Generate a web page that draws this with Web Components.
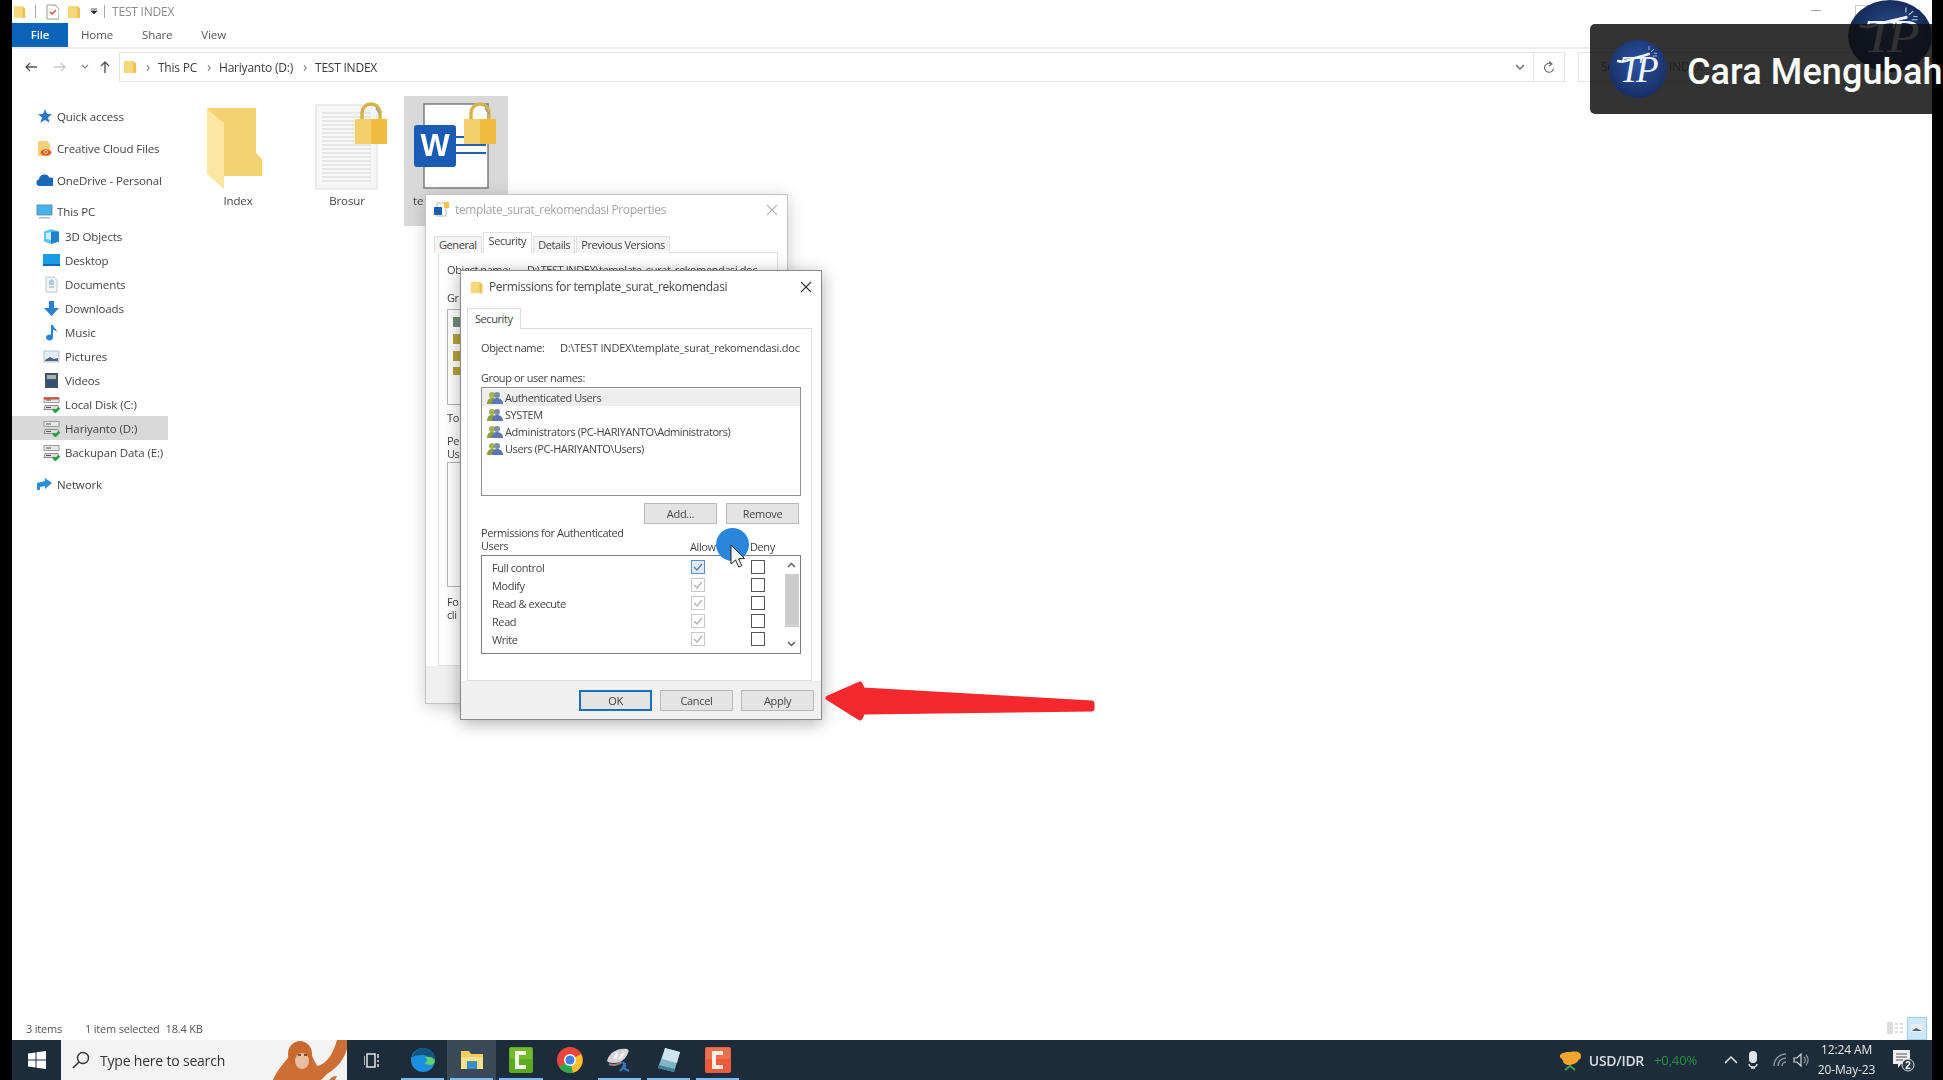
<!DOCTYPE html>
<html lang="id">
<head>
<meta charset="utf-8">
<title>TEST INDEX</title>
<style>
html, body { margin: 0; height: 100%; background: #000; overflow: hidden; }
body { font: 11.5px "Open Sans", "Noto Sans", sans-serif; color: #3c3c3c; letter-spacing: -.12px; }
</style>
</head>
<body>
<desk-frame>
  <explorer-window>
    <title-bar></title-bar>
    <ribbon-tabs></ribbon-tabs>
    <address-bar></address-bar>
    <main-area>
      <nav-pane slot="nav">
        <nav-item icon="star">Quick access</nav-item>
        <nav-item icon="cc" gap="8">Creative Cloud Files</nav-item>
        <nav-item icon="onedrive" gap="8">OneDrive - Personal</nav-item>
        <nav-item icon="pc" gap="7">This PC</nav-item>
        <nav-item icon="cube" sub gap="1">3D Objects</nav-item>
        <nav-item icon="desktop" sub>Desktop</nav-item>
        <nav-item icon="docs" sub>Documents</nav-item>
        <nav-item icon="down" sub>Downloads</nav-item>
        <nav-item icon="music" sub>Music</nav-item>
        <nav-item icon="pics" sub>Pictures</nav-item>
        <nav-item icon="video" sub>Videos</nav-item>
        <nav-item icon="diskc" sub>Local Disk (C:)</nav-item>
        <nav-item icon="disk" sub selected>Hariyanto (D:)</nav-item>
        <nav-item icon="disk" sub>Backupan Data (E:)</nav-item>
        <nav-item icon="network" gap="8">Network</nav-item>
      </nav-pane>
      <file-tile thumb="folder">Index</file-tile>
      <file-tile thumb="pdf">Brosur</file-tile>
      <file-tile thumb="word" selected>te</file-tile>
    </main-area>
    <status-bar></status-bar>
  </explorer-window>
  <task-bar></task-bar>

  <win-dialog x="425" y="194" w="363" h="510" icon="wordsmall" heading="template_surat_rekomendasi Properties" dim>
    <props-body></props-body>
  </win-dialog>
  <win-dialog x="460" y="270" w="362" h="450" icon="folder" heading="Permissions for template_surat_rekomendasi">
    <perm-body></perm-body>
  </win-dialog>
  <click-mark></click-mark>
  <red-arrow></red-arrow>
  <corner-logo></corner-logo>
  <title-card>Cara Mengubah</title-card>
</desk-frame>

<script>
"use strict";

const svg = (w, h, body, vb) =>
    `<svg width="${w}" height="${h}" viewBox="${vb || `0 0 ${w} ${h}`}" style="display:block;flex:none">${body}</svg>`;

const lockShape = `<path d="M7 19v-8a9 9 0 0 1 18 0v8" fill="none" stroke="#d7b24a" stroke-width="3.4"/>
    <path d="M21 6l4 6" stroke="#999" stroke-width="1.4"/>
    <rect x="0" y="17" width="32" height="25" rx="1" fill="#f4cf6c"/><rect x="16" y="17" width="16" height="25" fill="#f0bd3e"/>`;

const folderSmall = `<path d="M1 2h10l3 3v10H1z" fill="#f6d77c"/><path d="M11 2l3 3v10h-3z" fill="#eebf4e"/>`;
const driveShape = `<rect x="1" y="1.5" width="15" height="5" fill="#e8e8e8" stroke="#8b8b8b" stroke-width=".8"/>
    <path d="M2 9.5h13l1 4H1z" fill="#dcdcdc" stroke="#777" stroke-width=".8"/>
    <path d="M3 4h5M3 11.5h5" stroke="#555" stroke-width="1"/>
    <path d="M10 13.5l2.4 2.4 4-4.2" fill="none" stroke="#1ea33a" stroke-width="2.4"/>`;

const icons = {
    star: `<path d="M9 1l2 5 5 .3-4 3.2 1.6 5.2L9 12l-4.6 2.7L6 9.500 2 6.300 7 6z" fill="#2d77c8"/>`,
    cc: `<path d="M2 1h9l3 3v12H2z" fill="#f5d27a"/><ellipse cx="10" cy="12.500" rx="5.500" ry="3.300" fill="#e2632b"/><circle cx="10" cy="12" r="1.600" fill="none" stroke="#fbd9b8" stroke-width=".8"/>`,
    onedrive: `<path d="M3 14a3.500 3.500 0 0 1 0-6.800 5.500 5.500 0 0 1 10.500-1.400A4.300 4.300 0 0 1 17 14z" fill="#1768b8"/>`,
    pc: `<rect x="1" y="2" width="15" height="10" fill="#45b3ee" stroke="#5b7f94" stroke-width=".8"/><rect x="3" y="14" width="11" height="1.500" fill="#aebcc6"/>`,
    cube: `<path d="M8 1l8 2.500v10L8 16l-7-2.500v-10z" fill="#5dc7f0"/><path d="M8 3.500l8-.0v10L8 16z" fill="#1b86cf"/><path d="M3 5l5-1v8l-5-1z" fill="#cdeefa"/>`,
    desktop: `<rect x="0" y="2" width="17" height="11" fill="#1a9be3"/><rect x="0" y="12" width="17" height="2" fill="#0c6cb0"/>`,
    docs: `<path d="M3 1h8l3 3v12H3z" fill="#f4f6f8" stroke="#b6bcc2" stroke-width=".8"/><path d="M6 5l2.500-2L11 5v4H6z" fill="#a9cbe6"/><path d="M6 11h5" stroke="#8aa" stroke-width="1"/>`,
    down: `<path d="M6 1h5v7h5l-7.500 8L1 8h5z" fill="#2a7fd0"/>`,
    music: `<path d="M8 1h2c.5 3 3.500 3.500 4 7-1.500-1.500-3-2-4-2v7.500a3.500 3 0 1 1-2-2.700z" fill="#2384d4"/>`,
    pics: `<rect x="1" y="3" width="15" height="11" fill="#e4edf3" stroke="#aab6bf" stroke-width=".8"/><path d="M2 12l5-3 4 2 4-1v3H2z" fill="#506478"/>`,
    video: `<rect x="2" y="1" width="13" height="15" fill="#47525e"/><rect x="4" y="3" width="9" height="4" fill="#a4b3c0"/><rect x="4" y="9" width="9" height="5" fill="#2c4f80"/>`,
    disk: driveShape,
    diskc: driveShape + `<rect x="1" y="1.500" width="15" height="2" fill="#d24b35"/>`,
    network: `<path d="M1 7l8-2V2l7 5-7 6v-3l-5 1v3H1z" fill="#2b8fd8"/>`,
    folder: folderSmall,
    wordsmall: `<rect x="4" y="1" width="9" height="13" fill="#fff" stroke="#aaa" stroke-width=".8"/><rect x="1" y="5" width="8" height="8" fill="#1d5fb3"/><path d="M11 0h5v6h-5z" fill="#f1c14d"/>`
};

// TP mark, used by the title card and by the corner watermark
const tpMark = (w, h, gid, dark, rim) => {
    const u = w / 58;
    return svg(w, h, `
<defs><radialGradient id="${gid}" cx=".5" cy=".4" r=".62"><stop offset="0" stop-color="${dark}"/><stop offset="1" stop-color="${rim}"/></radialGradient></defs>
<ellipse cx="${w / 2}" cy="${h / 2}" rx="${w / 2}" ry="${h / 2}" fill="url(#${gid})"/>
<g transform="scale(${u} ${h / 58})">
  <text x="28" y="42" text-anchor="middle" font-family="Liberation Serif" font-style="italic" font-size="37" letter-spacing="-4" fill="#f2f5fa">TP</text>
  <path d="M9 21c6 2 10-1 17-3s11-3 14-4" fill="none" stroke="#f2f5fa" stroke-width="2.400" stroke-linecap="round"/>
  <path d="M42 12l3-3M44 16h4M40 10V6M45 13l3 .500" stroke="#b7cdee" stroke-width=".8"/>
</g>`);
};

class WebBox extends HTMLElement {
    connectedCallback() {
        if (this.shadowRoot) return;
        this.attachShadow({mode: 'open'});
        this.shadowRoot.innerHTML = this.markup();
    }
    markup() { return '<slot></slot>'; }
}

class DeskFrame extends WebBox {
    markup() {
        return `<style>
:host { display: flex; flex-direction: column; position: relative; height: 1080px; margin: 0 11px 0 12px; background: #fff; }
</style><slot></slot>`;
    }
}

class ExplorerWindow extends WebBox {
    markup() {
        return `<style>
:host { display: flex; flex-direction: column; flex: 1; min-height: 0; background: #fff; filter: blur(.5px); }
</style><slot></slot>`;
    }
}

class TitleBar extends WebBox {
    markup() {
        return `<style>
:host { display: flex; align-items: center; height: 23px; flex: none; padding-left: 1px; color: #8b8b8b; font-size: 12px; letter-spacing: -.2px; box-sizing: border-box; position: relative; }
.sep { width: 1px; height: 13px; background: #aaa; flex: none; }
.min { position: absolute; left: 1799px; top: 10px; width: 10px; height: 1px; background: #aaa; }
.max { position: absolute; left: 1843px; top: 5px; width: 14px; height: 14px; border: 1px solid #ccc; }
</style>
${svg(13, 18, folderSmall, '0 0 15 17')}<span class="sep" style="margin:0 10px 0 9px"></span>
${svg(13, 16, `<path d="M1 1h8l4 4v10H1z" fill="#fff" stroke="#999"/><path d="M4 8l2 2 4-4" fill="none" stroke="#c8553d" stroke-width="1.300"/>`)}
<span style="width:8px"></span>${svg(14, 18, folderSmall, '0 0 15 17')}
<span style="width:10px"></span>${svg(6, 8, `<path d="M0 1h6M0 3l3 3 3-3z" stroke="#333" stroke-width=".8" fill="#333"/>`)}<span class="sep" style="margin:0 7px"></span>
<span>TEST INDEX</span><i class="min"></i><i class="max"></i>`;
    }
}

class RibbonTabs extends WebBox {
    markup() {
        return `<style>
:host { display: flex; align-items: center; height: 24px; flex: none; border-bottom: 2px solid #eee; color: #555; font-size: 11.5px; }
b { font-weight: 600; background: #0a63b8; color: #fff; width: 56px; height: 24px; line-height: 23px; text-align: center; margin-right: 13px; }
span { margin-right: 29px; padding-bottom: 2px; }
</style><b>File</b><span>Home</span><span>Share</span><span>View</span>`;
    }
}

class AddressBar extends WebBox {
    markup() {
        const chev = `<span class="c">›</span>`;
        return `<style>
:host { display: flex; align-items: center; height: 30px; margin-top: 3px; flex: none; color: #3c3c3c; font-size: 12px; letter-spacing: -.22px; }
.nav { display: flex; width: 107px; align-items: center; flex: none; }
.box { display: flex; align-items: center; border: 1px solid #e4e4e4; box-sizing: border-box; height: 30px; width: 1446px; flex: none; padding-left: 3px; }
.c { margin: 0 8px 0 10px; color: #777; font-size: 14px; line-height: 14px; }
.c.first { margin-left: 9px; }
.end { margin-left: auto; display: flex; align-items: center; height: 100%; }
.dd { padding-right: 8px; }
.rf { border-left: 1px solid #e4e4e4; height: 100%; width: 30px; display: flex; align-items: center; justify-content: center; }
.search { margin-left: 13px; border: 1px solid #e4e4e4; box-sizing: border-box; height: 30px; flex: 1; padding-left: 22px; line-height: 28px; color: #777; white-space: nowrap; overflow: hidden; }
</style>
<div class="nav">
  <span style="margin-left:12px">${svg(14, 12, `<path d="M13 6H2M6 2L2 6l4 4" fill="none" stroke="#555" stroke-width="1.300"/>`)}</span>
  <span style="margin-left:15px">${svg(14, 12, `<path d="M1 6h11M8 2l4 4-4 4" fill="none" stroke="#c9c9c9" stroke-width="1.300"/>`)}</span>
  <span style="margin-left:14px">${svg(8, 6, `<path d="M1 1l3 3 3-3" fill="none" stroke="#888" stroke-width="1.200"/>`)}</span>
  <span style="margin-left:10px">${svg(12, 14, `<path d="M6 13V2M2 6l4-4 4 4" fill="none" stroke="#555" stroke-width="1.400"/>`)}</span>
</div>
<div class="box">
  ${svg(14, 16, folderSmall, '0 0 15 17')}<span class="c first">›</span><span>This PC</span>${chev}<span>Hariyanto (D:)</span>${chev}<span>TEST INDEX</span>
  <div class="end"><span class="dd">${svg(10, 7, `<path d="M1 1l4 4 4-4" fill="none" stroke="#666" stroke-width="1.300"/>`)}</span>
  <span class="rf">${svg(12, 13, `<path d="M10.500 7.500a4.500 4.500 0 1 1-2-4.500M6 .5l3 2.500-3 2" fill="none" stroke="#666" stroke-width="1.100"/>`)}</span></div>
</div>
<div class="search">Search TEST INDEX</div>`;
    }
}

class MainArea extends WebBox {
    markup() {
        return `<style>
:host { display: flex; flex: 1; min-height: 0; }
.files { display: flex; align-items: flex-start; gap: 5px; padding: 14px 0 0 18px; }
</style><slot name="nav"></slot><div class="files"><slot></slot></div>`;
    }
}

class NavPane extends WebBox {
    markup() {
        return `<style>
:host { display: block; width: 156px; flex: none; padding-top: 22px; box-sizing: border-box; color: #444; }
</style><slot></slot>`;
    }
}

class NavItem extends WebBox {
    markup() {
        const sub = this.hasAttribute('sub');
        const gap = this.getAttribute('gap') || 0;
        return `<style>
:host { display: flex; align-items: center; height: 24px; margin-top: ${gap}px; padding-left: ${sub ? 31 : 24}px; background: ${this.hasAttribute('selected') ? '#d9d9d9' : 'transparent'}; white-space: nowrap; }
span { margin-left: ${sub ? 5 : 4}px; }
</style>${svg(17, 17, icons[this.getAttribute('icon')], '0 0 17 17')}<span><slot></slot></span>`;
    }
}

class FileTile extends WebBox {
    markup() {
        const kind = this.getAttribute('thumb');
        const art = {
            folder: `<path d="M21 12h49v45l6 6v17H38z" fill="#f5d271"/><path d="M21 13l17 14v66L21 78z" fill="#fbe6a2"/>`,
            pdf: `<rect x="21" y="9" width="61" height="84" fill="#f7f7f7" stroke="#dedede"/>
                <path d="M27 17h49M27 21h49M27 25h49M27 29h49M27 33h49M27 37h49M27 41h49M27 45h49M27 49h49M27 53h49M27 57h49M27 61h49M27 65h49M27 69h49M27 73h49M27 77h49M27 81h49M27 85h49" stroke="#d5d5d5"/>
                <g transform="translate(60 6)">${lockShape}</g>`,
            word: `<rect x="20" y="8" width="64" height="84" fill="#fff" stroke="#7d7d7d" stroke-width="1.500"/>
                <path d="M50 41h32M50 49h32M50 57h32" stroke="#1d5fb3" stroke-width="2"/>
                <rect x="10" y="29" width="42" height="42" rx="3" fill="#1a5cb5"/>
                <text x="31" y="60" text-anchor="middle" font-family="Liberation Sans" font-weight="700" font-size="31" fill="#fff">W</text>
                <g transform="translate(60 6)">${lockShape}</g>`
        }[kind];
        const sel = this.hasAttribute('selected');
        return `<style>
:host { display: block; width: 104px; height: 130px; background: ${sel ? '#d9d9d9' : 'transparent'}; text-align: ${sel ? 'left' : 'center'}; color: #444; flex: none; }
.l { display: block; padding: 0 9px; margin-top: 1px; line-height: 16px; }
</style>${svg(104, 96, art)}<span class="l"><slot></slot></span>`;
    }
}

class StatusBar extends WebBox {
    markup() {
        return `<style>
:host { display: flex; align-items: center; height: 24px; flex: none; padding-left: 14px; color: #555; font-size: 11px; letter-spacing: -.2px; padding-right: 5px; }
.a { width: 59px; }
.b { margin-left: 6px; }
.v { margin-left: auto; display: flex; align-items: center; }
.on { width: 20px; height: 23px; background: #cde8fa; border: 1px solid #9fd0ee; box-sizing: border-box; display: flex; align-items: center; justify-content: center; margin-left: 4px; }
</style>
<span class="a">3 items</span><span>1 item selected</span><span class="b">18.4 KB</span>
<span class="v">${svg(16, 12, `<rect x="0" y="0" width="6" height="12" fill="#ddd"/><path d="M8 2h3M13 2h3M8 6h3M13 6h3M8 10h3M13 10h3" stroke="#bbb"/>`)}
<span class="on">${svg(12, 8, `<rect width="12" height="8" fill="#e6eef3"/><path d="M1 7l4-3 6 3z" fill="#50606e"/>`)}</span></span>`;
    }
}

class TaskBar extends WebBox {
    markup() {
        const app = (art, opts = {}) =>
            `<span class="app ${opts.on ? 'on' : ''} ${opts.run === false ? '' : 'run'}">${art}</span>`;
        const edge = svg(24, 24, `<circle cx="12" cy="12" r="12" fill="#1a8fe0"/><path d="M1 9C3 3 8 0 12 0c6 0 12 5 12 12 0 3-2 5-5 5-3 0-5-1-6-2 3 0 5-1 5-3 0-3-3-5-7-5-4 0-8 1-10 2z" fill="#10557f"/><path d="M14 9c4-1 8 0 10 3 0 3-2 5-5 5-3 0-5-1-6-2 2 0 3-1 3-3 0-1-1-2-2-3z" fill="#5fcf70"/>`);
        const files = svg(24, 22, `<path d="M1 2h8l2 3h12v15H1z" fill="#f4cd5d"/><rect x="1" y="8" width="22" height="12" fill="#fbe08a"/><rect x="7" y="12" width="10" height="8" fill="#3c8fcd"/>`);
        const green = svg(24, 26, `<rect width="24" height="26" rx="2" fill="#5cab1d"/><rect x="1" y="1" width="22" height="11" rx="1" fill="#74bb2b"/><path d="M17 6H8v14h9" fill="none" stroke="#f2f7ec" stroke-width="4"/>`);
        const chrome = svg(26, 26, `<circle cx="13" cy="13" r="13" fill="#e8453c"/><path d="M13 13L2 20a13 13 0 0 0 14 5.700z" fill="#2da94f"/><path d="M13 13l11-6a13 13 0 0 1-8 18.700z" fill="#fbc02d"/><circle cx="13" cy="13" r="6" fill="#fff"/><circle cx="13" cy="13" r="4.500" fill="#3d80e8"/>`);
        const swirl = svg(28, 26, `<path d="M2 14C4 6 12 1 22 2c2 1 2 2 1 4-3 7-8 10-13 10-3 0-6 0-8-2z" fill="#d8d4d6"/><path d="M8 12l3-7 2 1-1 6zM13 12l5-7 2 1-4 6z" fill="#f2f2f2"/><path d="M4 17c5 2 9 1 13-2" fill="none" stroke="#9a7f84" stroke-width="2"/><path d="M18 15l2 4-5 5M20 16l-2 5 6 3" fill="none" stroke="#2e78c4" stroke-width="2.400"/>`);
        const note = svg(24, 26, `<path d="M8 1l15 4-6 20L1 21z" fill="#7fb6c4"/><path d="M8 1l15 4-3 11L5 12z" fill="#cfe6ef"/><path d="M1 21l16 4 1-3-16-4z" fill="#3f7f96"/>`);
        const orange = svg(26, 26, `<rect width="26" height="26" rx="2" fill="#ea5c3a"/><rect x="1" y="1" width="24" height="11" rx="1" fill="#ee714f"/><path d="M18 6H9v14h9" fill="none" stroke="#fbeee9" stroke-width="4"/>`);
        return `<style>
:host { display: flex; align-items: stretch; height: 40px; flex: none; background: #1c2c3b; color: #eaeaea; filter: blur(.4px); }
.win { width: 49px; display: flex; align-items: center; justify-content: center; flex: none; }
.search { width: 286px; flex: none; background: #f3f3f3; color: #333; display: flex; align-items: center; position: relative; font-size: 14px; letter-spacing: -.2px; overflow: hidden; }
.search .ic { margin: 0 9px 0 10px; }
.orang { position: absolute; right: 0; top: 0; }
.tv { width: 50px; display: flex; align-items: center; justify-content: center; flex: none; }
.apps { display: flex; margin-left: 1px; }
.app { width: 49.200px; display: flex; align-items: center; justify-content: center; position: relative; }
.app.on { background: #3a4a58; }
.app.run::after { content: ""; position: absolute; left: 3px; right: 3px; bottom: 0; height: 2px; background: #7dbdf0; }
.tray { margin-left: auto; display: flex; align-items: center; padding-right: 16px; }
.usd { margin-left: 7px; font-size: 14px; font-weight: 600; color: #d9dde2; letter-spacing: -.3px; }
.pct { margin-left: 10px; color: #1e9442; font-size: 13px; width: 68px; white-space: nowrap; }
.clock { width: 67px; text-align: center; font-size: 12px; line-height: 20px; color: #e6e6e6; margin: 0 12px 0 4px; }
.clock div { white-space: nowrap; }
</style>
<div class="win">${svg(18, 18, `<path d="M0 2.500l7.500-1V8.500H0zM8.500 1.300L18 0v8.500H8.500zM0 9.500h7.500v7L0 15.500zM8.500 9.500H18V18l-9.500-1.300z" fill="#fff"/>`)}</div>
<div class="search"><span class="ic">${svg(20, 20, `<circle cx="12" cy="8" r="5.500" fill="none" stroke="#333" stroke-width="1.400"/><path d="M8 12l-6 6" stroke="#333" stroke-width="1.600"/>`)}</span>Type here to search
  <span class="orang">${svg(80, 40, `<path d="M6 40C10 30 18 22 24 14c6-6 20-6 22 4l4 8c10-2 16-12 20-26h12c-2 14-8 26-22 34l-6 6z" fill="#cd6e34"/><ellipse cx="33" cy="14" rx="12" ry="13" fill="#c9692f"/><ellipse cx="35" cy="21" rx="7" ry="8" fill="#e8bf9e"/><path d="M31 15h3M37 15h3" stroke="#5a2d10" stroke-width="1.300"/><path d="M62 40c2-2 4-4 8-4l-2 4z" fill="#cd6e34"/>`)}</span>
</div>
<div class="tv">${svg(16, 15, `<rect x="3" y="1" width="8" height="13" fill="none" stroke="#e4e4e4" stroke-width="1.500"/><path d="M0 3v9M14 1v4M14 7v2M14 11v3" stroke="#e4e4e4" stroke-width="1.500"/>`)}</div>
<div class="apps">
  ${app(edge)}${app(files, {on: true})}${app(green)}${app(chrome, {run: false})}${app(swirl)}${app(note)}${app(orange)}
</div>
<div class="tray">
  ${svg(24, 24, `<path d="M2 7c3-3 7-3 9-3s6-1 9 0c3 1 3 3 3 5s-2 2-3 4-6 4-9 4-6-2-6-4-4-3-3-6z" fill="#f0a62c"/><path d="M7 22l5-4 5 4" fill="none" stroke="#3fa34d" stroke-width="2"/>`)}
  <span class="usd">USD/IDR</span><span class="pct">+0,40%</span>
  <span style="margin:0 0 0 2px">${svg(14, 8, `<path d="M1 7l6-6 6 6" fill="none" stroke="#e6e6e6" stroke-width="1.500"/>`)}</span>
  <span style="margin-left:10px">${svg(10, 18, `<rect x="1" y="0" width="8" height="12" rx="4" fill="#e0e4e8"/><path d="M1 13a4 3 0 0 0 8 0M3 17h4" stroke="#e0e4e8" fill="none" stroke-width="1.400"/>`)}</span>
  <span style="margin-left:15px">${svg(14, 14, `<path d="M1 13a12 12 0 0 1 12-12M5 13a8 8 0 0 1 8-8M9 13a4 4 0 0 1 4-4" fill="none" stroke="#8d98a3" stroke-width="1.400"/>`)}</span>
  <span style="margin-left:6px">${svg(16, 14, `<path d="M1 5h3l4-4v12L4 9H1z" fill="none" stroke="#d0d4d8" stroke-width="1.200"/><path d="M11 4a4 4 0 0 1 0 6M13 2a7 7 0 0 1 0 10" fill="none" stroke="#9aa3ab" stroke-width="1.100"/>`)}</span>
  <div class="clock"><div>12:24 AM</div><div>20-May-23</div></div>
  ${svg(24, 24, `<path d="M1 2h17v14H9l-3 4v-4H1z" fill="#eee"/><path d="M4 6h11M4 9h11M4 12h7" stroke="#555" stroke-width="1"/><circle cx="16" cy="17" r="6" fill="#2a3a48" stroke="#ddd"/><text x="16" y="20.500" text-anchor="middle" font-family="Liberation Sans" font-weight="700" font-size="10" fill="#fff">2</text>`)}
</div>`;
    }
}

class WinDialog extends WebBox {
    markup() {
        const a = n => this.getAttribute(n);
        const dim = this.hasAttribute('dim');
        return `<style>
:host { position: absolute; left: ${a('x') - 12}px; top: ${a('y')}px; width: ${a('w')}px; height: ${a('h')}px; box-sizing: border-box; display: flex; flex-direction: column; background: #fff; border: 1px solid ${dim ? '#c4c4c4' : '#8a8a8a'}; box-shadow: 0 3px 16px rgba(0,0,0,${dim ? '.2' : '.32'}); filter: blur(.5px); color: #444; font-size: 11px; letter-spacing: -.42px; }
.top { display: flex; align-items: center; height: ${dim ? 32 : 34}px; box-sizing: border-box; padding-bottom: 3px; flex: none; padding-left: ${dim ? 7 : 9}px; color: ${dim ? '#a5a5a5' : '#444'}; font-size: 12px; letter-spacing: -.35px; }
.top .tt { margin-left: ${dim ? 6 : 5}px; white-space: nowrap; }
.x { margin-left: auto; margin-right: 9px; }
.body { flex: 1; min-height: 0; display: flex; flex-direction: column; }
</style>
<div class="top">${svg(dim ? 16 : 14, 16, icons[a('icon')], '0 0 16 16')}<span class="tt">${a('heading')}</span>
<span class="x">${svg(12, 12, `<path d="M1 1l10 10M11 1L1 11" stroke="${dim ? '#b5b5b5' : '#333'}" stroke-width="1.100"/>`)}</span></div>
<div class="body"><slot></slot></div>`;
    }
}

class WinButton extends WebBox {
    markup() {
        const main = this.hasAttribute('default');
        return `<style>
:host { display: block; width: 73px; height: 21px; box-sizing: border-box; background: #e4e4e4; border: ${main ? '2px solid #1a6fb5' : '1px solid #b9b9b9'}; line-height: ${main ? 17 : 19}px; text-align: center; color: #444; flex: none; letter-spacing: -.3px; }
</style><slot></slot>`;
    }
}

class UserRow extends WebBox {
    markup() {
        const art = `<circle cx="5" cy="4" r="3" fill="#a7b34c"/><path d="M0 13c0-4 2-6 5-6s5 2 5 6z" fill="#8d9e3f"/><circle cx="10" cy="4" r="3" fill="#7a8f9f"/><path d="M5 13c0-4 2-6 5-6s6 2 6 6z" fill="#5a76b4"/>`;
        return `<style>
:host { display: flex; align-items: center; height: 17px; padding-left: 5px; background: ${this.hasAttribute('hot') ? '#eeeeee' : 'transparent'}; white-space: nowrap; }
span { margin-left: 2px; }
</style>${svg(16, 14, art)}<span><slot></slot></span>`;
    }
}

const checkBox = kind => {
    if (kind === 'blue') return svg(14, 14, `<rect x=".5" y=".5" width="13" height="13" fill="#dfeaf5" stroke="#5d8fc4"/><path d="M3 7l3 3 5-6" fill="none" stroke="#4f7fb0" stroke-width="1.200"/>`);
    if (kind === 'grey') return svg(14, 14, `<rect x=".5" y=".5" width="13" height="13" fill="#fff" stroke="#c8c8c8"/><path d="M3 7l3 3 5-6" fill="none" stroke="#b0b0b0" stroke-width="1.200"/>`);
    return svg(14, 14, `<rect x=".5" y=".5" width="13" height="13" fill="#fff" stroke="#555"/>`);
};

class PermRow extends WebBox {
    markup() {
        return `<style>
:host { display: grid; grid-template-columns: 199px 60px 14px; align-items: center; height: 18px; padding-left: 10px; }
</style><span><slot></slot></span>${checkBox(this.getAttribute('allow'))}${checkBox('off')}`;
    }
}

class PermBody extends WebBox {
    markup() {
        return `<style>
:host { display: flex; flex-direction: column; flex: 1; min-height: 0; padding-top: 2px; }
.tab { width: 54px; height: 21px; margin-left: 6px; border: 1px solid #dcdcdc; border-bottom: 0; box-sizing: border-box; line-height: 19px; padding-left: 7px; background: #fff; position: relative; top: 1px; }
.panel { margin: 0 9px 0 6px; height: 353px; box-sizing: border-box; border: 1px solid #dcdcdc; padding: 11px 10px 0 13px; flex: none; }
.obj { display: grid; grid-template-columns: 79px 1fr; height: 16px; line-height: 16px; white-space: nowrap; }
.obj span + span { letter-spacing: -.2px; }
.lb { margin-top: 14px; height: 16px; line-height: 16px; }
.list { height: 109px; margin-top: 1px; border: 1px solid #8e8e8e; box-sizing: border-box; padding-top: 1px; }
.btns { display: flex; justify-content: flex-end; gap: 9px; margin: 7px 2px 0 0; }
.hd { display: grid; grid-template-columns: 209px 60px auto; height: 31px; line-height: 13px; align-items: end; padding-bottom: 2px; box-sizing: border-box; }
.hd span:first-child { position: relative; top: -1px; }
.perm { height: 99px; box-sizing: border-box; border: 1px solid #7e7e7e; padding-top: 2px; position: relative; }
.sb { position: absolute; right: 0; top: 0; bottom: 0; width: 17px; display: flex; flex-direction: column; align-items: center; justify-content: space-between; padding: 6px 0; box-sizing: border-box; }
.th { position: absolute; right: 1px; top: 18px; width: 14px; height: 53px; background: #cdcdcd; }
.foot { flex: 1; background: #f0f0f0; display: flex; justify-content: flex-end; gap: 8px; padding: 9px 7px 0 0; }
</style>
<div class="tab">Security</div>
<div class="panel">
  <div class="obj"><span>Object name:</span><span>D:\\TEST INDEX\\template_surat_rekomendasi.doc</span></div>
  <div class="lb">Group or user names:</div>
  <div class="list">
    <user-row hot>Authenticated Users</user-row>
    <user-row>SYSTEM</user-row>
    <user-row>Administrators (PC-HARIYANTO\\Administrators)</user-row>
    <user-row>Users (PC-HARIYANTO\\Users)</user-row>
  </div>
  <div class="btns"><win-button>Add...</win-button><win-button>Remove</win-button></div>
  <div class="hd"><span>Permissions for Authenticated<br>Users</span><span>Allow</span><span>Deny</span></div>
  <div class="perm">
    <perm-row allow="blue">Full control</perm-row>
    <perm-row allow="grey">Modify</perm-row>
    <perm-row allow="grey">Read &amp; execute</perm-row>
    <perm-row allow="grey">Read</perm-row>
    <perm-row allow="grey">Write</perm-row>
    <div class="th"></div>
    <div class="sb">${svg(9, 6, `<path d="M1 5l3.500-3.500L8 5" fill="none" stroke="#555" stroke-width="1.400"/>`)}${svg(9, 6, `<path d="M1 1l3.500 3.500L8 1" fill="none" stroke="#555" stroke-width="1.400"/>`)}</div>
  </div>
</div>
<div class="foot"><win-button default>OK</win-button><win-button>Cancel</win-button><win-button>Apply</win-button></div>`;
    }
}

class PropsBody extends WebBox {
    markup() {
        const users = `<svg width="8" height="58" style="display:block;position:absolute;left:5px;top:7px">
            <rect y="0" width="8" height="10" fill="#6f8f7a"/><rect y="17" width="8" height="10" fill="#b5a23e"/><rect y="34" width="8" height="10" fill="#b5a23e"/><rect y="50" width="8" height="8" fill="#b5a23e"/></svg>`;
        return `<style>
:host { display: flex; flex-direction: column; flex: 1; min-height: 0; padding-top: 4px; }
.tabs { display: flex; align-items: flex-end; height: 21px; padding-left: 8px; }
.tabs span { height: 17px; line-height: 16px; border: 1px solid #e0e0e0; border-bottom: 0; background: #f5f5f5; padding: 0 4px; box-sizing: border-box; margin-right: 1px; position: relative; top: 1px; }
.tabs .on { height: 21px; background: #fff; line-height: 15px; padding: 0 5px; }
.panel { margin: 0 9px 0 12px; height: 414px; border: 1px solid #e0e0e0; box-sizing: border-box; padding: 10px 0 0 8px; flex: none; overflow: hidden; }
.l { height: 13px; line-height: 13px; white-space: nowrap; }
.g { width: 260px; height: 96px; margin-top: 5px; border: 1px solid #b5b5b5; position: relative; box-sizing: border-box; }
.h { width: 260px; height: 125px; border: 1px solid #b5b5b5; box-sizing: border-box; }
.foot { flex: 1; background: #f0f0f0; }
</style>
<div class="tabs"><span>General</span><span class="on">Security</span><span>Details</span><span>Previous Versions</span></div>
<div class="panel">
  <div class="l" style="display:grid;grid-template-columns:80px 1fr">
    <span>Object name:</span><span>D:\\TEST INDEX\\template_surat_rekomendasi.doc</span></div>
  <div class="l" style="margin-top:15px">Gr</div>
  <div class="g">${users}</div>
  <div class="l" style="margin-top:6px">To</div>
  <div class="l" style="margin-top:10px">Pe<br>Us</div>
  <div class="h" style="margin-top:15px"></div>
  <div class="l" style="margin-top:8px">Fo<br>cli</div>
</div>
<div class="foot"></div>`;
    }
}

class ClickMark extends WebBox {
    markup() {
        return `<style>
:host { position: absolute; left: ${716 - 12}px; top: 528px; width: 34px; height: 42px; filter: blur(.6px); }
</style>${svg(34, 42, `<circle cx="16.500" cy="16.500" r="16.500" fill="#2a86dc"/>
<path d="M15 17l0 19 4.500-4 3.300 7 3-1.400-3.200-6.800 6-.3z" fill="#f4f6f8" stroke="#222" stroke-width="1"/>`)}`;
    }
}

class RedArrow extends WebBox {
    markup() {
        return `<style>
:host { position: absolute; left: ${820 - 12}px; top: 677px; width: 280px; height: 50px; }
</style>${svg(280, 50, `<path d="M8 21L40 7l3 6 229 13v6L43 35l-3 6z" fill="#f5282d" stroke="#f5282d" stroke-width="5" stroke-linejoin="round"/>`)}`;
    }
}

class CornerLogo extends WebBox {
    markup() {
        return `<style>
:host { position: absolute; left: ${1848 - 12}px; top: 0; width: 84px; height: 72px; }
</style>${tpMark(84, 72, 'cg', '#274a8c', '#0f1f45')}`;
    }
}

class TitleCard extends WebBox {
    markup() {
        return `<style>
:host { position: absolute; left: ${1590 - 12}px; top: 24px; right: 0; height: 90px; background: rgba(15,15,15,.85); border-radius: 5px 0 0 5px; display: flex; align-items: center; color: #fff; font: 500 36px Roboto, sans-serif; letter-spacing: .1px; white-space: nowrap; }
.small { margin-left: 19px; flex: none; }
.txt { margin-left: 20px; padding-top: 5px; }
</style><span class="small">${tpMark(58, 58, 'sg', '#2b55a5', '#152d63')}</span><span class="txt"><slot></slot></span>`;
    }
}

const parts = {
    'desk-frame': DeskFrame, 'explorer-window': ExplorerWindow, 'title-bar': TitleBar,
    'ribbon-tabs': RibbonTabs, 'address-bar': AddressBar, 'main-area': MainArea,
    'nav-pane': NavPane, 'nav-item': NavItem, 'file-tile': FileTile, 'status-bar': StatusBar,
    'task-bar': TaskBar, 'win-dialog': WinDialog, 'win-button': WinButton, 'user-row': UserRow,
    'perm-row': PermRow, 'perm-body': PermBody, 'props-body': PropsBody, 'click-mark': ClickMark,
    'red-arrow': RedArrow, 'corner-logo': CornerLogo, 'title-card': TitleCard
};
for (const name in parts) window.customElements.define(name, parts[name]);
</script>
</body>
</html>
